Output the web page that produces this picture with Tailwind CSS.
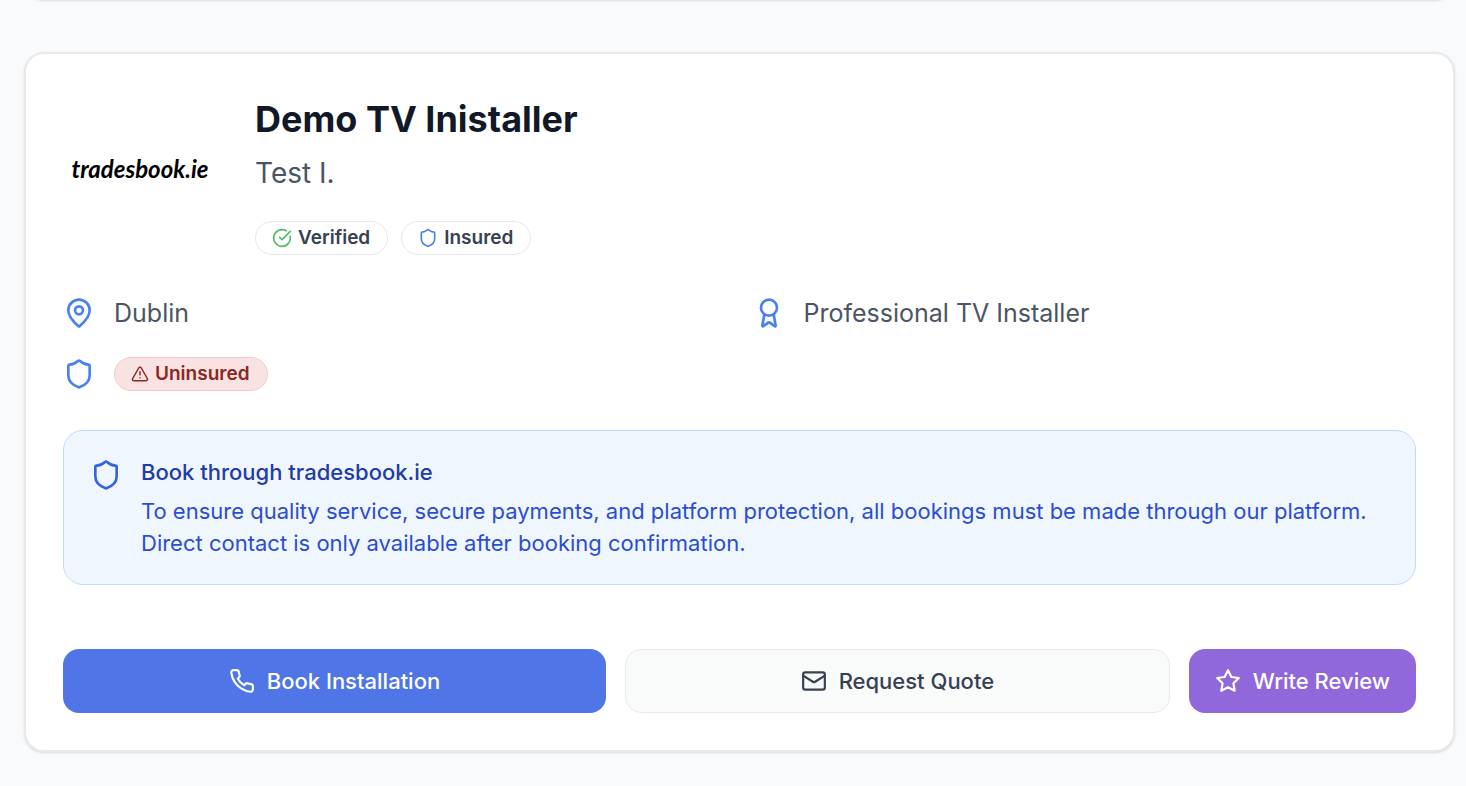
<!DOCTYPE html>
<html lang="en">
<head>
<meta charset="utf-8">
<meta name="viewport" content="width=device-width, initial-scale=1">
<title>Demo TV Inistaller</title>
<script src="https://cdn.jsdelivr.net/npm/@tailwindcss/browser@4"></script>
</head>
<body class="min-h-screen overflow-x-hidden bg-[#f9fafc] font-['Inter',sans-serif]">
<svg class="hidden" aria-hidden="true">
  <symbol id="shield" viewBox="0 0 24 24"><path d="M20 13c0 5-3.500 7.500-7.660 8.950a1 1 0 0 1-.67-.01C7.500 20.500 4 18 4 13V6a1 1 0 0 1 1-1c2 0 4.500-1.200 6.240-2.720a1.170 1.170 0 0 1 1.520 0C14.510 3.810 17 5 19 5a1 1 0 0 1 1 1z"/></symbol>
</svg>
<main class="flex flex-col gap-[52px] pl-6 pr-[11px]">
  <div class="-mt-10 h-10 rounded-[20px] border-2 border-[#e8e9eb] bg-white shadow-sm"></div>
  <article class="rounded-[20px] border-2 border-[#e8e9eb] bg-white px-[37px] pt-[38px] pb-[37px] shadow-sm">
    <header class="flex items-start gap-[38px]">
      <div class="flex size-[154px] shrink-0 items-center justify-center font-['Lato',sans-serif] text-[24px] leading-8 font-bold text-black italic">tradesbook.ie</div>
      <div class="flex flex-col">
        <h2 class="text-[36px] leading-[54px] font-bold text-[#111827]">Demo TV Inistaller</h2>
        <p class="mt-[7px] text-[28px] leading-10 text-[#4b5563]">Test I.</p>
        <div class="mt-7 flex gap-[13px]">
          <span class="flex h-[34px] items-center gap-1.5 rounded-full border border-[#e5e7eb] pr-[17px] pl-4 text-[19px] leading-8 font-semibold text-[#374151]">
            <svg class="size-5 fill-none stroke-[#52bd63] stroke-2" viewBox="0 0 24 24" stroke-linecap="round" stroke-linejoin="round" aria-hidden="true"><path d="M21.801 10A10 10 0 1 1 17 3.335"/><path d="m9 11 3 3L22 4"/></svg>
            Verified
          </span>
          <span class="flex h-[34px] items-center gap-1.5 rounded-full border border-[#e5e7eb] pr-[17px] pl-4 text-[19px] leading-8 font-semibold text-[#374151]">
            <svg class="size-5 fill-none stroke-[#4a80f0] stroke-2" stroke-linecap="round" stroke-linejoin="round" aria-hidden="true"><use href="#shield"/></svg>
            Insured
          </span>
        </div>
      </div>
    </header>
    <div class="mt-[39px] grid grid-cols-2 gap-x-[26px] gap-y-[23px] text-[25px] leading-[38px] text-[#4b5563]">
      <div class="flex items-center gap-[19px]">
        <svg class="size-8 shrink-0 fill-none stroke-[#4a80f0] stroke-2" viewBox="0 0 24 24" stroke-linecap="round" stroke-linejoin="round" aria-hidden="true"><path d="M20 10c0 4.993-5.539 10.193-7.399 11.799a1 1 0 0 1-1.202 0C9.539 20.193 4 14.993 4 10a8 8 0 0 1 16 0"/><circle cx="12" cy="10" r="3"/></svg>
        <span>Dublin</span>
      </div>
      <div class="flex items-center gap-[19px]">
        <svg class="size-8 shrink-0 fill-none stroke-[#4a80f0] stroke-2" viewBox="0 0 24 24" stroke-linecap="round" stroke-linejoin="round" aria-hidden="true"><path d="m15.477 12.890 1.515 8.526a.5.5 0 0 1-.81.470l-3.580-2.687a1 1 0 0 0-1.197 0l-3.586 2.686a.5.5 0 0 1-.81-.469l1.514-8.526"/><circle cx="12" cy="8" r="6"/></svg>
        <span>Professional TV Installer</span>
      </div>
      <div class="flex h-[38px] items-center gap-[19px]">
        <svg class="size-8 shrink-0 fill-none stroke-[#4a80f0] stroke-2" stroke-linecap="round" stroke-linejoin="round" aria-hidden="true"><use href="#shield"/></svg>
        <span class="flex h-[34px] items-center gap-1.5 rounded-full border border-[#f5caca] bg-[#f9e2e2] pr-[17px] pl-4 text-[19px] leading-8 font-semibold text-[#8c2822]">
          <svg class="size-[18px] fill-none stroke-[#8c2822] stroke-2" viewBox="0 0 24 24" stroke-linecap="round" stroke-linejoin="round" aria-hidden="true"><path d="m21.730 18-8-14a2 2 0 0 0-3.480 0l-8 14A2 2 0 0 0 4 21h16a2 2 0 0 0 1.730-3"/><path d="M12 9v4"/><path d="M12 17h.01"/></svg>
          Uninsured
        </span>
      </div>
    </div>
    <section class="mt-[37px] flex items-start gap-[19px] rounded-[20px] border border-[#c1dafb] bg-[#eff6fe] px-[26px] py-[25px]">
      <svg class="mt-[3px] size-8 shrink-0 fill-none stroke-[#3463e4] stroke-2" stroke-linecap="round" stroke-linejoin="round" aria-hidden="true"><use href="#shield"/></svg>
      <div class="text-[22px] leading-8">
        <h3 class="font-medium text-[#233ca6]">Book through tradesbook.ie</h3>
        <p class="mt-[7px] text-[#2c4dd2]">To ensure quality service, secure payments, and platform protection, all bookings must be made through our platform. Direct contact is only available after booking confirmation.</p>
      </div>
    </section>
    <div class="mt-16 flex gap-[19px] text-[22px] leading-8 font-medium">
      <button type="button" class="flex h-16 flex-1 items-center justify-center gap-3 rounded-2xl bg-[#4f75e6] text-white">
        <svg class="size-[26px] fill-none stroke-current stroke-2" viewBox="0 0 24 24" stroke-linecap="round" stroke-linejoin="round" aria-hidden="true"><path d="M22 16.920v3a2 2 0 0 1-2.180 2 19.790 19.790 0 0 1-8.630-3.070 19.500 19.500 0 0 1-6-6 19.790 19.790 0 0 1-3.070-8.670A2 2 0 0 1 4.110 2h3a2 2 0 0 1 2 1.720 12.840 12.840 0 0 0 .7 2.810 2 2 0 0 1-.45 2.110L8.090 9.910a16 16 0 0 0 6 6l1.270-1.270a2 2 0 0 1 2.110-.45 12.840 12.840 0 0 0 2.810.7A2 2 0 0 1 22 16.920z"/></svg>
        Book Installation
      </button>
      <button type="button" class="flex h-16 flex-1 items-center justify-center gap-3 rounded-2xl border border-[#e7e9eb] bg-[#f9fbfb] text-[#374151]">
        <svg class="size-[26px] fill-none stroke-current stroke-2" viewBox="0 0 24 24" stroke-linecap="round" stroke-linejoin="round" aria-hidden="true"><rect width="20" height="16" x="2" y="4" rx="2"/><path d="m22 7-8.970 5.700a1.940 1.940 0 0 1-2.060 0L2 7"/></svg>
        Request Quote
      </button>
      <button type="button" class="flex h-16 items-center justify-center gap-3 rounded-2xl bg-[#9068db] px-[26px] text-white">
        <svg class="size-[26px] fill-none stroke-current stroke-2" viewBox="0 0 24 24" stroke-linecap="round" stroke-linejoin="round" aria-hidden="true"><path d="m12 2 3.090 6.260L22 9.270l-5 4.870 1.180 6.880L12 17.770l-6.180 3.250L7 14.140 2 9.270l6.910-1.010z"/></svg>
        Write Review
      </button>
    </div>
  </article>
</main>
</body>
</html>
